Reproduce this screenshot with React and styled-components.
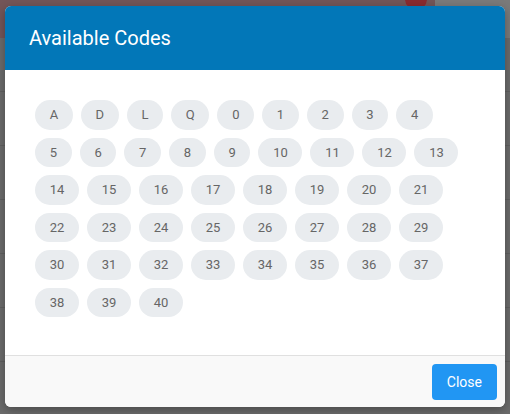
import React from "react";
import styled, { createGlobalStyle } from "styled-components";

const GlobalStyle = createGlobalStyle`
    html, body {
        margin: 0;
        padding: 0;
        background: #6b6b6b;
    }
    body {
        font-family: Roboto, "Liberation Sans", Arial, sans-serif;
    }
`;

const codes = ["A", "D", "L", "Q"].concat(
    Array.from({ length: 41 }, (_, i) => String(i))
);

const Screen = styled.div`
    position: relative;
    width: 510px;
    height: 414px;
    overflow: hidden;
    background: #6b6b6b;
`;

const TopBar = styled.div`
    display: flex;
    height: 38px;
`;

const Brand = styled.div`
    flex: 0 0 435px;
    background: #735558;
    display: flex;
    justify-content: flex-end;
    align-items: flex-start;
    padding-right: 8px;
    box-sizing: border-box;
`;

const Avatar = styled.div`
    width: 22px;
    height: 22px;
    margin-top: -12px;
    border-radius: 50%;
    background: #8a2a2e;
`;

const TopSide = styled.div`
    flex: 1;
    background: #7a7a7a;
`;

const Row = styled.div`
    height: 54px;
    box-sizing: border-box;
    border-bottom: 1px solid #5f5f5f;
`;

const Modal = styled.div`
    position: absolute;
    top: 6px;
    left: 5px;
    width: 500px;
    background: #fff;
    border-radius: 6px;
    overflow: hidden;
    box-shadow: 0 3px 10px rgba(0, 0, 0, 0.3);
`;

const Header = styled.div`
    height: 64px;
    display: flex;
    align-items: center;
    padding: 0 24px;
    background: #0277b8;

    h2 {
        margin: 0;
        font-size: 20px;
        font-weight: 400;
        color: #fff;
    }
`;

const Body = styled.div`
    padding: 26px 30px 34px 26px;
`;

const Chips = styled.div`
    display: flex;
    flex-wrap: wrap;
`;

const Chip = styled.span`
    margin: 4px;
    padding: 5px 14.7px;
    font-size: 13px;
    line-height: 19.5px;
    color: #666;
    background: #e9ecef;
    border-radius: 15px;
`;

const Footer = styled.div`
    display: flex;
    justify-content: flex-end;
    padding: 8px 8px 7px;
    background: #f9f9f9;
    border-top: 1px solid #e0e0e0;
`;

const Button = styled.button`
    height: 36px;
    padding: 0 15px;
    border: none;
    border-radius: 4px;
    background: #2196f3;
    color: #fff;
    font-family: inherit;
    font-size: 14px;
    cursor: pointer;
`;

const App = () => {
    return (
        <Screen>
            <GlobalStyle />
            <TopBar>
                <Brand>
                    <Avatar />
                </Brand>
                <TopSide />
            </TopBar>
            {[0, 1, 2, 3, 4, 5].map((i) => (
                <Row key={i} />
            ))}

            <Modal>
                <Header>
                    <h2>Available Codes</h2>
                </Header>
                <Body>
                    <Chips>
                        {codes.map((c) => (
                            <Chip key={c}>{c}</Chip>
                        ))}
                    </Chips>
                </Body>
                <Footer>
                    <Button>Close</Button>
                </Footer>
            </Modal>
        </Screen>
    );
};

export default App;
